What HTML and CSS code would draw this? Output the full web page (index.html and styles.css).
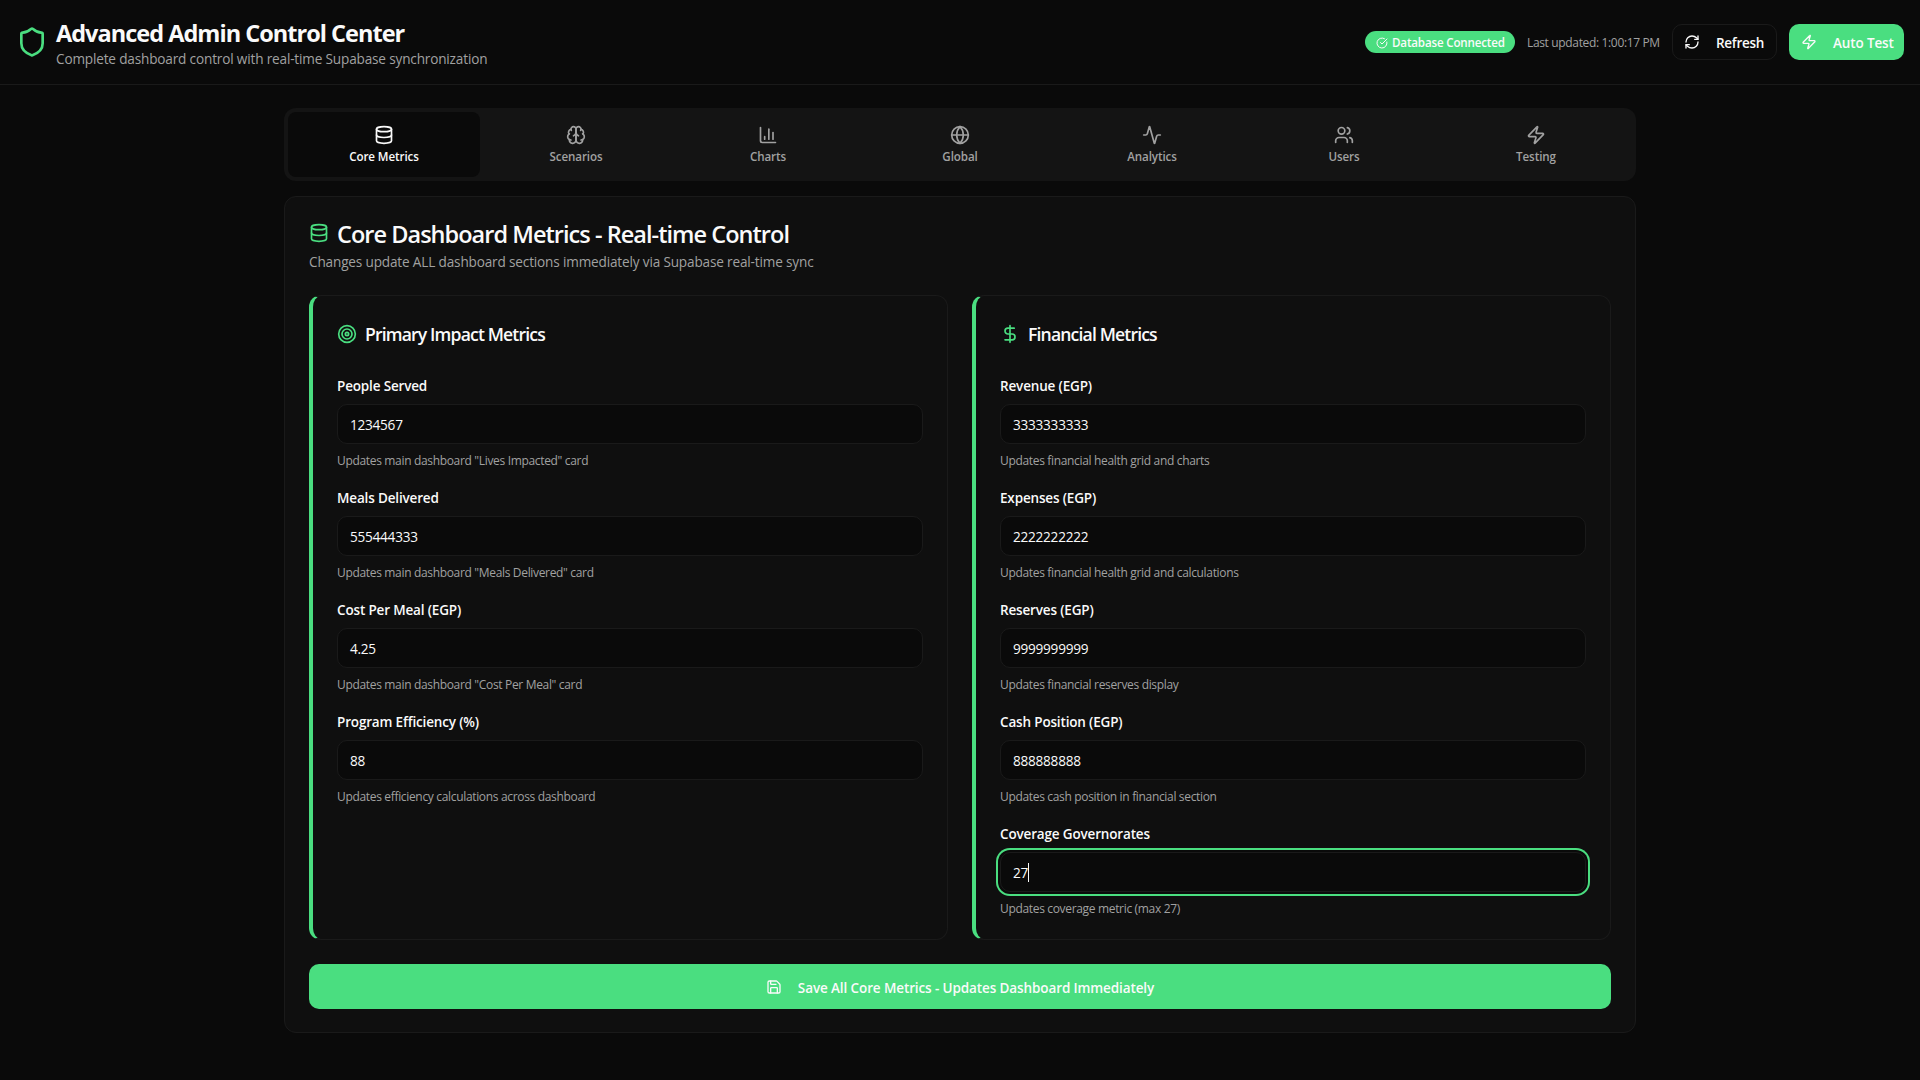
FILE: index.html
```
<!DOCTYPE html>
<html lang="en">
<head>
<meta charset="utf-8">
<title>Advanced Admin Control Center</title>
<link rel="stylesheet" href="styles.css">
</head>
<body>
<svg class="sprite" aria-hidden="true">
  <symbol id="database" viewBox="0 0 24 24"><ellipse cx="12" cy="5" rx="9" ry="3"/><path d="M3 5V19A9 3 0 0 0 21 19V5"/><path d="M3 12A9 3 0 0 0 21 12"/></symbol>
  <symbol id="zap" viewBox="0 0 24 24"><path d="M4 14a1 1 0 0 1-.78-1.63l9.9-10.2a.5.5 0 0 1 .86.46l-1.92 6.02A1 1 0 0 0 13 10h7a1 1 0 0 1 .78 1.63l-9.9 10.2a.5.5 0 0 1-.86-.46l1.92-6.02A1 1 0 0 0 11 14z"/></symbol>
</svg>

<header class="topbar">
  <div class="brand">
    <svg class="icon icon-32 green" viewBox="0 0 24 24"><path d="M20 13c0 5-3.500 7.500-7.660 8.950a1 1 0 0 1-.67-.01C7.500 20.500 4 18 4 13V6a1 1 0 0 1 1-1c2 0 4.500-1.200 6.240-2.720a1.170 1.170 0 0 1 1.520 0C14.510 3.810 17 5 19 5a1 1 0 0 1 1 1z"/></svg>
    <div>
      <h1 class="brand-title">Advanced Admin Control Center</h1>
      <p class="brand-sub">Complete dashboard control with real-time Supabase synchronization</p>
    </div>
  </div>
  <div class="actions">
    <div class="badge"><svg class="icon icon-12" viewBox="0 0 24 24"><path d="M21.801 10A10 10 0 1 1 17 3.335"/><path d="m9 11 3 3L22 4"/></svg><span>Database Connected</span></div>
    <span class="updated">Last updated: 1:00:17 PM</span>
    <button class="btn btn-outline"><svg class="icon icon-16" viewBox="0 0 24 24"><path d="M3 12a9 9 0 0 1 9-9 9.750 9.750 0 0 1 6.740 2.740L21 8"/><path d="M21 3v5h-5"/><path d="M21 12a9 9 0 0 1-9 9 9.750 9.750 0 0 1-6.740-2.740L3 16"/><path d="M8 16H3v5"/></svg><span class="tight">Refresh</span></button>
    <button class="btn btn-primary"><svg class="icon icon-16"><use href="#zap"/></svg><span>Auto Test</span></button>
  </div>
</header>

<main class="page">
  <nav class="tabs">
    <a class="tab active"><svg class="icon icon-20"><use href="#database"/></svg><span>Core Metrics</span></a>
    <a class="tab"><svg class="icon icon-20" viewBox="0 0 24 24"><path d="M12 5a3 3 0 1 0-5.997.125 4 4 0 0 0-2.526 5.770 4 4 0 0 0 .556 6.588A4 4 0 1 0 12 18Z"/><path d="M12 5a3 3 0 1 1 5.997.125 4 4 0 0 1 2.526 5.770 4 4 0 0 1-.556 6.588A4 4 0 1 1 12 18Z"/><path d="M15 13a4.500 4.500 0 0 1-3-4 4.500 4.500 0 0 1-3 4"/><path d="M17.599 6.500a3 3 0 0 0 .399-1.375"/><path d="M6.003 5.125A3 3 0 0 0 6.401 6.500"/><path d="M3.477 10.896a4 4 0 0 1 .585-.396"/><path d="M19.938 10.500a4 4 0 0 1 .585.396"/><path d="M6 18a4 4 0 0 1-1.967-.516"/><path d="M19.967 17.484A4 4 0 0 1 18 18"/></svg><span>Scenarios</span></a>
    <a class="tab"><svg class="icon icon-20" viewBox="0 0 24 24"><path d="M3 3v16a2 2 0 0 0 2 2h16"/><path d="M18 17V9"/><path d="M13 17V5"/><path d="M8 17v-3"/></svg><span>Charts</span></a>
    <a class="tab"><svg class="icon icon-20" viewBox="0 0 24 24"><circle cx="12" cy="12" r="10"/><path d="M12 2a14.500 14.500 0 0 0 0 20 14.500 14.500 0 0 0 0-20"/><path d="M2 12h20"/></svg><span>Global</span></a>
    <a class="tab"><svg class="icon icon-20" viewBox="0 0 24 24"><path d="M22 12h-2.480a2 2 0 0 0-1.930 1.460l-2.350 8.360a.25.25 0 0 1-.48 0L9.240 2.180a.25.25 0 0 0-.48 0l-2.350 8.360A2 2 0 0 1 4.490 12H2"/></svg><span>Analytics</span></a>
    <a class="tab"><svg class="icon icon-20" viewBox="0 0 24 24"><path d="M16 21v-2a4 4 0 0 0-4-4H6a4 4 0 0 0-4 4v2"/><circle cx="9" cy="7" r="4"/><path d="M22 21v-2a4 4 0 0 0-3-3.870"/><path d="M16 3.130a4 4 0 0 1 0 7.750"/></svg><span>Users</span></a>
    <a class="tab"><svg class="icon icon-20"><use href="#zap"/></svg><span>Testing</span></a>
  </nav>

  <section class="card">
    <h2 class="card-title"><svg class="icon icon-20 green"><use href="#database"/></svg><span>Core Dashboard Metrics - Real-time Control</span></h2>
    <p class="card-desc">Changes update ALL dashboard sections immediately via Supabase real-time sync</p>

    <div class="panels">
      <div class="panel">
        <h3 class="panel-title"><svg class="icon icon-20 green" viewBox="0 0 24 24"><circle cx="12" cy="12" r="10"/><circle cx="12" cy="12" r="6"/><circle cx="12" cy="12" r="2"/></svg><span>Primary Impact Metrics</span></h3>
        <div class="field"><label class="label">People Served</label><div class="input">1234567</div><p class="hint">Updates main dashboard "Lives Impacted" card</p></div>
        <div class="field"><label class="label">Meals Delivered</label><div class="input">555444333</div><p class="hint">Updates main dashboard "Meals Delivered" card</p></div>
        <div class="field"><label class="label">Cost Per Meal (EGP)</label><div class="input">4.25</div><p class="hint">Updates main dashboard "Cost Per Meal" card</p></div>
        <div class="field"><label class="label">Program Efficiency (%)</label><div class="input">88</div><p class="hint">Updates efficiency calculations across dashboard</p></div>
      </div>
      <div class="panel">
        <h3 class="panel-title"><svg class="icon icon-20 green" viewBox="0 0 24 24"><path d="M12 2v20"/><path d="M17 5H9.500a3.500 3.500 0 0 0 0 7h5a3.500 3.500 0 0 1 0 7H6"/></svg><span>Financial Metrics</span></h3>
        <div class="field"><label class="label">Revenue (EGP)</label><div class="input">3333333333</div><p class="hint">Updates financial health grid and charts</p></div>
        <div class="field"><label class="label">Expenses (EGP)</label><div class="input">2222222222</div><p class="hint">Updates financial health grid and calculations</p></div>
        <div class="field"><label class="label">Reserves (EGP)</label><div class="input">9999999999</div><p class="hint">Updates financial reserves display</p></div>
        <div class="field"><label class="label">Cash Position (EGP)</label><div class="input">888888888</div><p class="hint">Updates cash position in financial section</p></div>
        <div class="field"><label class="label">Coverage Governorates</label><div class="input focused">27<i class="caret"></i></div><p class="hint">Updates coverage metric (max 27)</p></div>
      </div>
    </div>

    <button class="save"><svg class="icon icon-16" viewBox="0 0 24 24"><path d="M15.200 3a2 2 0 0 1 1.400.6l3.800 3.800a2 2 0 0 1 .6 1.400V19a2 2 0 0 1-2 2H5a2 2 0 0 1-2-2V5a2 2 0 0 1 2-2z"/><path d="M17 21v-7a1 1 0 0 0-1-1H8a1 1 0 0 0-1 1v7"/><path d="M7 3v4a1 1 0 0 0 1 1h7"/></svg><span>Save All Core Metrics - Updates Dashboard Immediately</span></button>
  </section>
</main>
</body>
</html>
```
FILE: styles.css
```
:root {
  --bg: #0a0a0a;
  --card: #0f0f0f;
  --muted-bg: #141414;
  --line: #1a1a1a;
  --text: #fafafa;
  --muted: #a1a1a1;
  --green: #4ade80;
}

* { box-sizing: border-box; margin: 0; padding: 0; }

body {
  background: var(--bg);
  color: var(--text);
  font-family: "Open Sans", "Noto Sans", sans-serif;
  font-size: 13.6px;
  white-space: nowrap;
  min-height: 100vh;
  overflow: hidden;
}

.sprite { display: none; }

.icon {
  flex: none;
  fill: none;
  stroke: currentColor;
  stroke-width: 2;
  stroke-linecap: round;
  stroke-linejoin: round;
}
.icon-12 { width: 12px; height: 12px; }
.icon-16 { width: 16px; height: 16px; }
.icon-20 { width: 20px; height: 20px; }
.icon-32 { width: 32px; height: 32px; }
.green { color: var(--green); }

.topbar {
  display: flex;
  align-items: center;
  justify-content: space-between;
  height: 85px;
  padding: 0 16px;
  border-bottom: 1px solid var(--line);
}
.brand { display: flex; align-items: center; gap: 8px; }
.brand-title {
  padding-top: 1px;
  font-size: 23.5px;
  font-weight: 700;
  line-height: 32px;
  letter-spacing: -0.98px;
}
.brand-sub {
  color: var(--muted);
  line-height: 20px;
  letter-spacing: -0.17px;
}

.actions { display: flex; align-items: center; gap: 12px; }
.badge {
  display: flex;
  align-items: center;
  gap: 4px;
  width: 150px;
  height: 22px;
  padding: 1px 11px 0;
  border-radius: 11px;
  background: var(--green);
  font-size: 11.6px;
  font-weight: 600;
  letter-spacing: -0.172px;
}
.updated {
  width: 133px;
  color: var(--muted);
  font-size: 12px;
  letter-spacing: -0.346px;
}

.btn, .save {
  display: flex;
  align-items: center;
  gap: 16px;
  border: 0;
  color: var(--text);
  font: 600 13.5px "Open Sans", "Noto Sans", sans-serif;
  letter-spacing: -0.11px;
}
.btn { height: 36px; border-radius: 10px; }
.btn span { padding-top: 2px; }
.btn-outline { width: 105px; border: 1px solid var(--line); background: var(--bg); padding-left: 11px; }
.btn-primary { width: 115px; background: var(--green); padding-left: 12px; letter-spacing: -0.134px; }
.btn .tight { letter-spacing: -0.292px; }

.page { width: 1352px; margin: 23px auto 0; }

.tabs {
  display: grid;
  grid-template-columns: repeat(7, 1fr);
  height: 73px;
  padding: 4px;
  border-radius: 12px;
  background: var(--muted-bg);
}
.tab {
  display: flex;
  flex-direction: column;
  align-items: center;
  justify-content: center;
  gap: 4px;
  border-radius: 8px;
  color: var(--muted);
  font-size: 11.6px;
  font-weight: 600;
  line-height: 16px;
  letter-spacing: -0.09px;
}
.tab.active { background: var(--bg); color: var(--text); }

.card {
  margin-top: 15px;
  height: 837px;
  padding: 24px;
  border: 1px solid var(--line);
  border-radius: 12px;
  background: var(--card);
}
.card-title {
  display: flex;
  align-items: center;
  gap: 8px;
  height: 24px;
  font-size: 23.5px;
  font-weight: 600;
  letter-spacing: -0.965px;
}
.card-title span { padding-top: 2px; }
.card-desc {
  margin-top: 7px;
  color: var(--muted);
  line-height: 20px;
  letter-spacing: -0.165px;
}

.panels { display: grid; grid-template-columns: 1fr 1fr; gap: 24px; margin-top: 23px; }
.panel {
  height: 645px;
  padding: 24px;
  border: 1px solid var(--line);
  border-left: 4px solid var(--green);
  border-radius: 12px;
}
.panel-title {
  display: flex;
  align-items: center;
  gap: 8px;
  height: 28px;
  font-size: 17.6px;
  font-weight: 600;
  letter-spacing: -0.85px;
}
.field { margin-top: 15px; }
.panel-title + .field { margin-top: 24px; }
.label {
  display: block;
  height: 32px;
  font-size: 13.5px;
  font-weight: 600;
  line-height: 28px;
  letter-spacing: -0.16px;
}
.input {
  display: flex;
  align-items: center;
  height: 40px;
  padding: 0 12px;
  border: 1px solid var(--line);
  border-radius: 10px;
  background: var(--bg);
  letter-spacing: -0.25px;
}
.input.focused { box-shadow: 0 0 0 2px var(--bg), 0 0 0 4px var(--green); }
.caret { width: 1px; height: 19px; background: var(--text); }
.hint {
  margin-top: 9px;
  color: var(--muted);
  font-size: 12px;
  line-height: 16px;
  letter-spacing: -0.33px;
}

.save {
  justify-content: center;
  width: 100%;
  height: 45px;
  margin-top: 24px;
  border-radius: 10px;
  background: var(--green);
}
.save span { padding-top: 2px; }
```
